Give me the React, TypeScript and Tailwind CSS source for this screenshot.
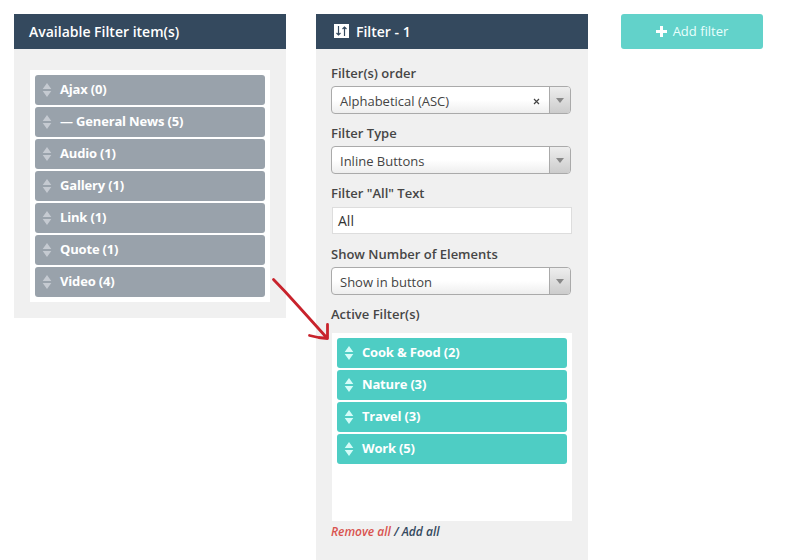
const available = [
  'Ajax (0)',
  '— General News (5)',
  'Audio (1)',
  'Gallery (1)',
  'Link (1)',
  'Quote (1)',
  'Video (4)',
];
const active = ['Cook & Food (2)', 'Nature (3)', 'Travel (3)', 'Work (5)'];

function SortIcon({ className }: { className: string }) {
  return (
    <svg width="10" height="16" viewBox="0 0 10 16" className={className} fill="currentColor">
      <path d="M5 1 9.3 7H.7zM5 15 .7 9h8.6z" />
    </svg>
  );
}

function Item({ label, tone }: { label: string; tone: 'gray' | 'teal' }) {
  return (
    <li
      className={
        'flex h-[30px] items-center rounded-[3px] pl-[7px] text-[13px] font-bold tracking-[-0.17px] text-white ' +
        (tone === 'gray' ? 'bg-[#99a2ab]' : 'bg-[#4ecdc4]')
      }
    >
      <SortIcon className={tone === 'gray' ? 'text-[#c5cad1]' : 'text-[#d4fcf8]'} />
      <span className="ml-2 self-start leading-[28px] whitespace-nowrap">{label}</span>
    </li>
  );
}

function Label({ children }: { children: string }) {
  return <div className="h-[26px] text-[13px] leading-[26px] font-semibold text-[#464646]">{children}</div>;
}

function Select({ value, clearable = false }: { value: string; clearable?: boolean }) {
  return (
    <div className="mb-1.5 flex h-7 w-60 overflow-hidden rounded border border-[#aaa] bg-linear-to-b from-white from-50% to-[#eee]">
      <span className="flex-1 pl-2 text-[13px] leading-[28px] text-[#444]">{value}</span>
      {clearable && (
        <svg width="7" height="7" viewBox="0 0 7 7" className="mt-[11px] mr-[9px]" stroke="#444" strokeWidth="1.2">
          <path d="M1 1l5 5M6 1 1 6" />
        </svg>
      )}
      <span className="flex w-[21px] justify-center border-l border-[#aaa] bg-linear-to-b from-[#eee] to-[#ccc] pt-[11px]">
        <svg width="8" height="5" viewBox="0 0 8 5" fill="#888">
          <path d="M0 0h8L4 5z" />
        </svg>
      </span>
    </div>
  );
}

export default function App() {
  return (
    <div className="relative flex h-[560px] w-[800px] items-start overflow-hidden bg-white pt-3.5 pl-3.5 font-['Open_Sans',sans-serif]">
      <section className="h-[304px] w-[272px] bg-[#f0f0f0]">
        <h2 className="h-[35px] bg-[#34495e] pl-[15px] text-sm leading-[35px] font-semibold text-white">
          Available Filter item(s)
        </h2>
        <ul className="mx-4 mt-[21px] flex flex-col gap-0.5 bg-white p-[5px]">
          {available.map((label) => (
            <Item key={label} label={label} tone="gray" />
          ))}
        </ul>
      </section>

      <section className="ml-[30px] h-[546px] w-[272px] bg-[#f0f0f0]">
        <h2 className="flex h-[35px] items-center bg-[#34495e] pl-[18px] text-sm font-semibold text-white">
          <svg width="15" height="14" viewBox="0 0 15 14" fill="none" className="-mt-0.5">
            <path d="M0 0h15v14H0z" fill="#fff" />
            <path d="M4.5 2v9M2.5 9l2 2 2-2M10.5 12V3M8.5 5l2-2 2 2" stroke="#34495e" strokeWidth="1.2" />
          </svg>
          <span className="ml-[7px]">Filter - 1</span>
        </h2>
        <div className="px-[15px] pt-[11px]">
          <Label>Filter(s) order</Label>
          <Select value="Alphabetical (ASC)" clearable />
          <Label>Filter Type</Label>
          <Select value="Inline Buttons" />
          <Label>Filter "All" Text</Label>
          <div className="mt-px mb-[7px] ml-px h-[27px] w-60 border border-[#ddd] bg-white pl-[5px] text-sm leading-[26px] text-[#333]">
            All
          </div>
          <Label>Show Number of Elements</Label>
          <Select value="Show in button" />
          <Label>Active Filter(s)</Label>
          <ul className="mt-1.5 ml-px flex h-[188px] w-60 flex-col gap-0.5 bg-white p-[5px]">
            {active.map((label) => (
              <Item key={label} label={label} tone="teal" />
            ))}
          </ul>
          <p className="text-xs leading-[22px] font-semibold text-[#34495e] italic">
            <span className="text-[#d9534f]">Remove all</span> / Add all
          </p>
        </div>
      </section>

      <button className="ml-[33px] flex h-[35px] w-[142px] items-center justify-center rounded-[3px] bg-[#62d2ca] text-[13px] font-medium text-[#e9fffd]">
        <svg width="11" height="11" viewBox="0 0 11 11" fill="white" className="mr-1.5">
          <path d="M4 0h3v4h4v3H7v4H4V7H0V4h4z" />
        </svg>
        Add filter
      </button>

      {/* Hand-drawn arrow pointing from the available items to the active list */}
      <svg
        className="absolute top-[270px] left-[265px]"
        width="70"
        height="75"
        viewBox="265 270 70 75"
        fill="none"
        stroke="#c8232c"
        strokeWidth="2.8"
        strokeLinecap="round"
        strokeLinejoin="round"
      >
        <path d="M273.5 279.5 285 291.5 300 308 327 338M327.5 324.5v14l-9-1-9-2" />
      </svg>
    </div>
  );
}
